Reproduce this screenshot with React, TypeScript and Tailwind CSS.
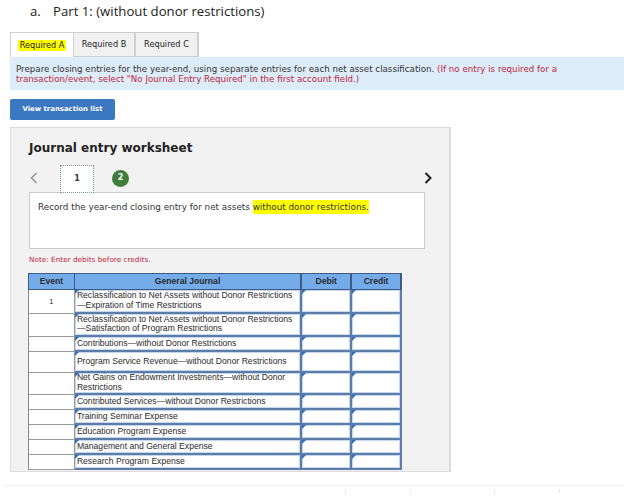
const rows: { label: string[]; h: string; event?: string }[] = [
  { label: ["Reclassification to Net Assets without Donor Restrictions", "—Expiration of Time Restrictions"], h: "h-[24px]", event: "1" },
  { label: ["Reclassification to Net Assets without Donor Restrictions", "—Satisfaction of Program Restrictions"], h: "h-[23px]" },
  { label: ["Contributions—without Donor Restrictions"], h: "h-[15px]" },
  { label: ["Program Service Revenue—without Donor Restrictions"], h: "h-[21px]" },
  { label: ["Net Gains on Endowment Investments—without Donor", "Restrictions"], h: "h-[22px]" },
  { label: ["Contributed Services—without Donor Restrictions"], h: "h-[15px]" },
  { label: ["Training Seminar Expense"], h: "h-[15px]" },
  { label: ["Education Program Expense"], h: "h-[15px]" },
  { label: ["Management and General Expense"], h: "h-[15px]" },
  { label: ["Research Program Expense"], h: "h-[15px]" },
];

function Marker() {
  return (
    <span className="absolute left-0 top-0 h-0 w-0 border-t-[4px] border-r-[4px] border-t-[#2f6fc4] border-r-transparent" />
  );
}

function InputCell({ className, children }: { className: string; children?: React.ReactNode }) {
  return (
    <div className={`relative border-r-2 border-b-2 border-[#5d7ca8] bg-white shadow-[inset_0_0_0_1px_#c3d7f0] ${className}`}>
      <Marker />
      {children}
    </div>
  );
}

export default function App() {
  return (
    <div className="relative h-[501px] w-[624px] overflow-hidden bg-white font-['DejaVu_Sans',sans-serif] text-[#222]">
      {/* title */}
      <div className="flex h-[32px] pl-[30px] pt-[1px] font-['Open_Sans',sans-serif] text-[13.2px] leading-[20px] text-[#222]">
        <span className="w-[23px]">a.</span>
        <span>Part 1: (without donor restrictions)</span>
      </div>

      {/* tabs */}
      <div className="ml-[10px] flex h-[25px] text-[8.2px]">
        <div className="flex w-[64px] items-center justify-center border-l border-r border-t border-[#cfcfcf] bg-white">
          <span className="bg-[#ffff00] px-[2px] leading-[11px]">Required A</span>
        </div>
        <div className="flex w-[62px] items-center justify-center border-r-2 border-t border-b border-[#cfcfcf] bg-[#f1f1f1]">
          Required B
        </div>
        <div className="flex w-[63px] items-center justify-center border-r-2 border-t border-b border-[#cfcfcf] bg-[#f1f1f1]">
          Required C
        </div>
      </div>

      {/* info */}
      <div className="ml-[10px] h-[33px] bg-[#ddecf9] px-[6px] pt-[7px] text-[8.7px] leading-[10px] text-[#333]">
        Prepare closing entries for the year-end, using separate entries for each net asset classification.{" "}
        <span className="text-[#c0263c]">
          (If no entry is required for a transaction/event, select "No Journal Entry Required" in the first account field.)
        </span>
      </div>

      <button className="ml-[10px] mt-[9px] flex h-[21px] w-[105px] items-center justify-center rounded-[2px] bg-[#3b78c1] text-[6.9px] font-bold text-white">
        View transaction list
      </button>

      {/* worksheet */}
      <div className="ml-[10px] mt-[7px] h-[345px] w-[441px] border border-r-2 border-[#dcdcdc] bg-[#f2f2f2]">
        <div className="pl-[18px] pt-[12px] text-[12px] font-bold leading-[16px] text-[#222]">Journal entry worksheet</div>

        <div className="relative ml-[18px] mt-[8px] flex h-[28px] w-[396px] items-center">
          <svg width="8" height="12" viewBox="0 0 8 12" className="ml-[1px]">
            <path d="M6.5 1 L1.5 6 L6.5 11" fill="none" stroke="#8d8d8d" strokeWidth="1.4" />
          </svg>
          <div className="z-10 ml-[22px] flex h-[28px] w-[34px] translate-y-[1px] items-center justify-center self-start border border-dotted border-[#7d93ad] bg-white text-[8px] font-bold text-[#333]">
            1
          </div>
          <div className="ml-[18px] flex h-[17px] w-[17px] items-center justify-center rounded-full bg-[#3f7d3c] text-[8px] font-bold text-white">
            2
          </div>
          <svg width="8" height="12" viewBox="0 0 8 12" className="ml-auto mr-[-7px]">
            <path d="M1.5 1 L6.5 6 L1.5 11" fill="none" stroke="#1f1f1f" strokeWidth="2" />
          </svg>
        </div>

        <div className="ml-[18px] h-[57px] w-[396px] border border-[#cccccc] bg-white pl-[8px] pt-[8px] text-[8.8px] text-[#333]">
          Record the year-end closing entry for net assets{" "}
          <span className="bg-[#ffff00] py-[2px]">without donor restrictions.</span>
        </div>

        <div className="ml-[18px] mt-[6px] text-[7.3px] text-[#c0263c]">Note: Enter debits before credits.</div>

        {/* table */}
        <div className="ml-[17px] mt-[7px] w-[374px] font-['Liberation_Sans',sans-serif] text-[8.6px] text-[#2a2a2a]">
          <div className="flex h-[17px] border-t border-l border-[#3f5b82] bg-[#74acea] font-bold">
            <div className="flex w-[46px] items-center justify-center border-r border-b border-[#3f5b82]">Event</div>
            <div className="flex w-[228px] items-center justify-center border-r-2 border-b border-[#3f5b82]">General Journal</div>
            <div className="flex w-[50px] items-center justify-center border-r-2 border-b border-[#3f5b82]">Debit</div>
            <div className="flex w-[50px] items-center justify-center border-r-2 border-b border-[#3f5b82]">Credit</div>
          </div>
          {rows.map((r, i) => (
            <div key={i} className={`flex ${r.h} border-l border-[#888]`}>
              <div className="flex w-[46px] items-center justify-center border-r border-b border-[#9a9a9a] bg-white text-[7.5px]">
                {r.event ?? ""}
              </div>
              <InputCell className="flex w-[228px] flex-col justify-center px-[2px] leading-[9.5px]">
                {r.label.map((l, j) => (
                  <span key={j} className="whitespace-nowrap">{l}</span>
                ))}
              </InputCell>
              <InputCell className="w-[50px]" />
              <InputCell className="w-[50px]" />
            </div>
          ))}
        </div>
      </div>

      {/* faint divider below */}
      <div className="ml-[5px] mt-[13px] border-t border-[#f0f0f0]">
        <div className="flex">
          <span className="ml-[340px] mt-[3px] h-[4px] w-px bg-[#e6e6e6]" />
          <span className="ml-[64px] mt-[3px] h-[4px] w-px bg-[#e6e6e6]" />
          <span className="ml-[83px] mt-[3px] h-[4px] w-px bg-[#e6e6e6]" />
          <span className="ml-[64px] mt-[3px] h-[4px] w-px bg-[#e6e6e6]" />
        </div>
      </div>
    </div>
  );
}
